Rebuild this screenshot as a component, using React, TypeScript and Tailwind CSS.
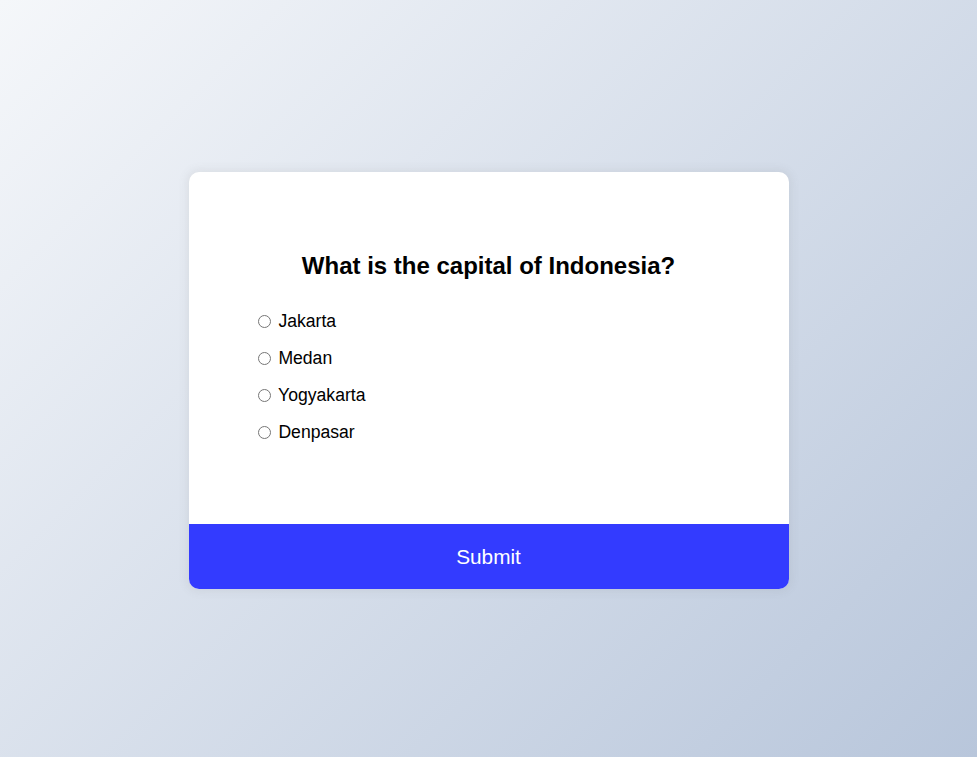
import { useState } from "react";

const options = ["Jakarta", "Medan", "Yogyakarta", "Denpasar"];

export default function App() {
  const [picked, setPicked] = useState<string | null>(null);

  return (
    <div className="h-screen w-full flex items-center justify-center overflow-hidden bg-[linear-gradient(315deg,#b8c6db_0%,#f5f7fa_100%)] font-['Liberation_Sans',Arial,sans-serif]">
      <div className="mt-1 w-[600px] overflow-hidden rounded-[10px] bg-white shadow-[0_0_10px_2px_rgba(100,100,100,0.1)]">
        <div className="p-16">
          <h2 className="p-4 text-center text-[24px] font-bold leading-[27.6px] text-black">
            What is the capital of Indonesia?
          </h2>
          <ul className="mt-[15px] mb-[17px] flex flex-col gap-4">
            {options.map((opt) => (
              <li key={opt} className="text-[17.6px] leading-[21px] text-black">
                <input
                  type="radio"
                  name="answer"
                  id={opt}
                  checked={picked === opt}
                  onChange={() => setPicked(opt)}
                  className="ml-[5px] mr-[3px] mt-[3px] h-[13px] w-[13px] align-[-1px]"
                />{" "}
                <label htmlFor={opt} className="cursor-pointer">
                  {opt}
                </label>
              </li>
            ))}
          </ul>
        </div>
        <button className="block w-full bg-[#333bff] py-[21px] text-[20.8px] leading-[23px] text-white cursor-pointer">
          Submit
        </button>
      </div>
    </div>
  );
}
